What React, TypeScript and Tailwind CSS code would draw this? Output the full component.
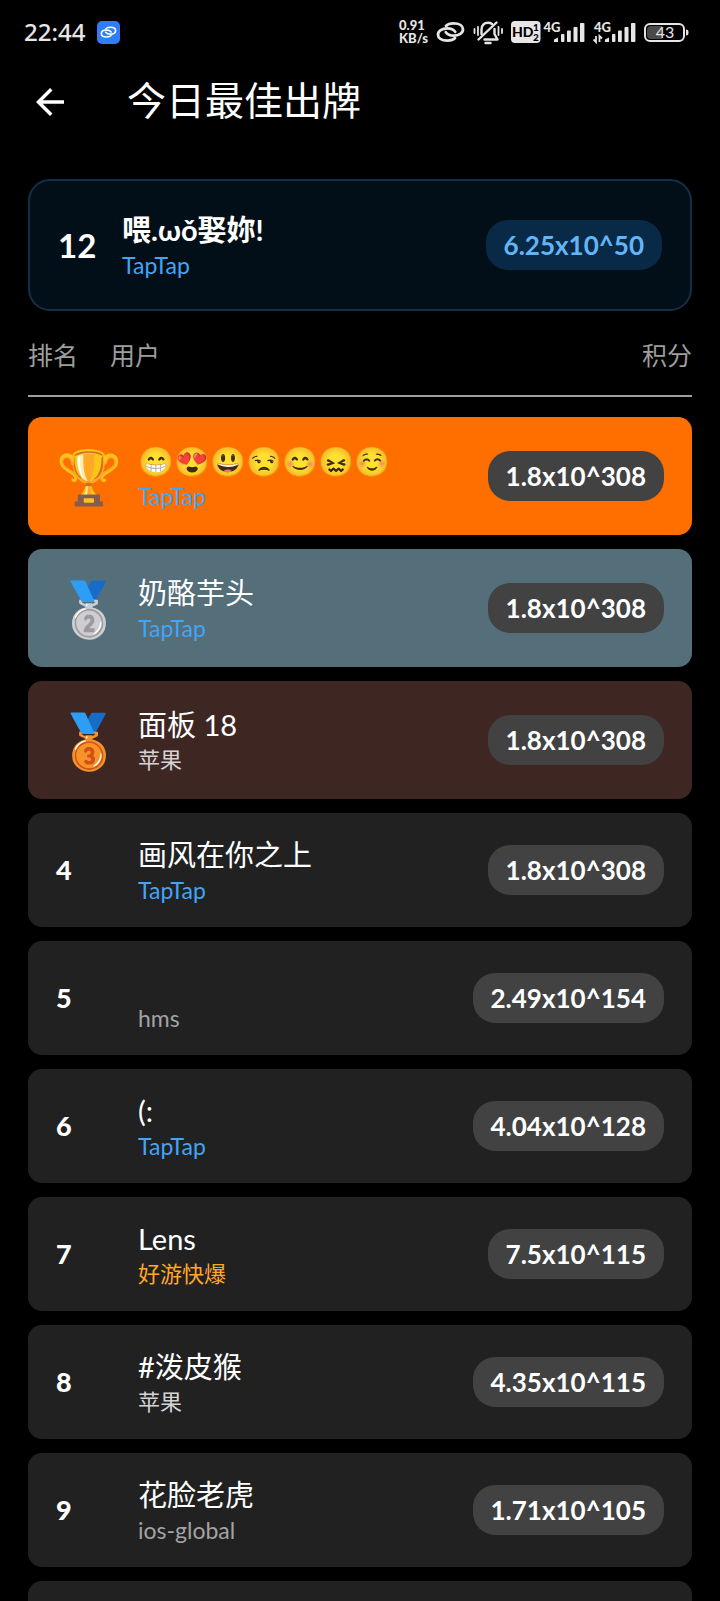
import type { ReactNode } from "react";

const LATIN = "font-['Lato','Noto_Sans_CJK_SC',sans-serif]";

type Tone = "blue" | "grey" | "light" | "amber";

interface Entry {
  rank: number;
  name: string;
  platform: string;
  tone: Tone;
  score: string;
}

const entries: Entry[] = [
  { rank: 1, name: "😁😍😃😒😊😖☺️", platform: "TapTap", tone: "blue", score: "1.8x10^308" },
  { rank: 2, name: "奶酪芋头", platform: "TapTap", tone: "blue", score: "1.8x10^308" },
  { rank: 3, name: "面板 18", platform: "苹果", tone: "light", score: "1.8x10^308" },
  { rank: 4, name: "画风在你之上", platform: "TapTap", tone: "blue", score: "1.8x10^308" },
  { rank: 5, name: "", platform: "hms", tone: "grey", score: "2.49x10^154" },
  { rank: 6, name: "(:", platform: "TapTap", tone: "blue", score: "4.04x10^128" },
  { rank: 7, name: "Lens", platform: "好游快爆", tone: "amber", score: "7.5x10^115" },
  { rank: 8, name: "#泼皮猴", platform: "苹果", tone: "light", score: "4.35x10^115" },
  { rank: 9, name: "花脸老虎", platform: "ios-global", tone: "grey", score: "1.71x10^105" },
  { rank: 10, name: "", platform: "", tone: "grey", score: "" },
];

const tones: Record<Tone, string> = {
  blue: "text-[23px] text-[#42a5f5]",
  grey: "text-[23px] text-[#a3a3a3]",
  light: "text-[22px] text-[#d4d4d4]",
  amber: "text-[22px] text-[#ffa726]",
};

const rowColors: Record<number, string> = {
  1: "bg-[#ff6f00]",
  2: "bg-[#546e7a]",
  3: "bg-[#3e2723]",
};

const medals: Record<number, string> = { 1: "🏆", 2: "🥈", 3: "🥉" };

function LinkRings({ color, width }: { color: string; width: number }) {
  const ring =
    "M13 10C14.800 8 17.600 7.400 20.600 7.400C26.600 7.400 30 10 30 13.200C30 17 26 19.600 20.600 19.600C17 19.600 14.400 18.400 12.800 16.200";
  return (
    <g fill="none" stroke={color} strokeWidth={width} strokeLinecap="round">
      <path d={ring} />
      <path d={ring} transform="rotate(180 17.500 16)" />
    </g>
  );
}

function Bars({ x }: { x: number }) {
  return (
    <g fill="#e6e6e6">
      <path d={`M${x} 26v-2.5l4-2V26z`} />
      <rect x={x + 7} y="18" width="3.4" height="8" rx="0.8" />
      <rect x={x + 13} y="14.5" width="3.8" height="11.5" rx="0.8" />
      <rect x={x + 19.5} y="11" width="4" height="15" rx="0.8" />
      <rect x={x + 26} y="7" width="4.4" height="19" rx="0.8" />
    </g>
  );
}

function StatusBar() {
  return (
    <div className="flex h-16 items-center pl-6 pr-[31px] text-[#e6e6e6]">
      <span className="text-[24px] font-medium leading-8 font-['Noto_Sans',sans-serif]">22:44</span>
      <svg className="ml-3 size-[23px]" viewBox="0 0 23 23" aria-hidden="true">
        <rect width="23" height="23" rx="5" fill="#2f7dfb" />
        <g transform="translate(1.5 2) scale(0.57)">
          <LinkRings color="#fff" width={2.8} />
        </g>
      </svg>
      <div className="ml-auto flex items-center">
        <div className="w-[34px] text-[13px] font-black leading-[13px]">
          <div>0.91</div>
          <div>KB/s</div>
        </div>
        <svg width="36" height="32" viewBox="0 0 36 32" aria-hidden="true">
          <LinkRings color="#e6e6e6" width={2.8} />
        </svg>
        <svg width="38" height="32" viewBox="0 0 38 32" fill="none" stroke="#e6e6e6" strokeWidth="2.4" strokeLinecap="round" strokeLinejoin="round" aria-hidden="true">
          <path d="M12.500 18V13.500C12.500 9.500 15 6.800 19 6.800c1.600 0 3 .4 4 1.200M25.500 13V18l3 5.500H15.500" />
          <path d="M9.500 23.500L27.500 6.500" />
          <path d="M16.500 27h5" />
          <path d="M9 11v8M5.500 13v4M29.500 11v8M33 13v4" strokeWidth="1.8" />
        </svg>
        <svg width="34" height="32" viewBox="0 0 34 32" aria-hidden="true">
          <rect x="4" y="5" width="29.500" height="22" rx="4" fill="#e6e6e6" />
          <g fill="#000" fontFamily="Lato, sans-serif" fontWeight="900">
            <text x="5" y="21" fontSize="14">HD</text>
            <text x="26" y="15" fontSize="10">1</text>
            <text x="26" y="25" fontSize="10">2</text>
          </g>
        </svg>
        <svg width="46" height="32" viewBox="0 0 46 32" aria-hidden="true">
          <text x="2.500" y="15.500" fontSize="13" fontWeight="900" fill="#e6e6e6" fontFamily="Lato, sans-serif">4G</text>
          <Bars x={13} />
        </svg>
        <svg width="52" height="32" viewBox="0 0 52 32" aria-hidden="true">
          <text x="7" y="15.500" fontSize="13" fontWeight="900" fill="#e6e6e6" fontFamily="Lato, sans-serif">4G</text>
          <g stroke="#e6e6e6" strokeWidth="1.800" fill="none">
            <path d="M9 20V26L6.500 23.500M12.500 26v-6l2.500 2.500" />
          </g>
          <Bars x={18} />
        </svg>
        <svg width="50" height="32" viewBox="0 0 50 32" aria-hidden="true">
          <rect x="6" y="8" width="39" height="17" rx="5" fill="none" stroke="#e6e6e6" strokeWidth="2" />
          <path d="M12 10h11v13H12a4 4 0 0 1-4-4v-5a4 4 0 0 1 4-4z" fill="#4a4a4a" />
          <path d="M47 13.500c2 0 2.500 1 2.500 3s-.5 3-2.500 3z" fill="#e6e6e6" />
          <text x="26" y="22" fontSize="16" textAnchor="middle" fill="#e6e6e6" fontFamily="Lato, sans-serif">43</text>
        </svg>
      </div>
    </div>
  );
}

function Pill({ children, className }: { children: ReactNode; className: string }) {
  return (
    <span className={`ml-auto shrink-0 rounded-[22px] px-[18px] py-2 text-[26px] font-bold leading-[34px] ${className}`}>
      {children}
    </span>
  );
}

function User({ name, platform, tone, bold }: { name: string; platform: string; tone: Tone; bold?: boolean }) {
  return (
    <div className="min-w-0">
      <div className={`h-10 truncate text-[29px] leading-10 text-white ${bold ? "font-bold" : ""}`}>{name}</div>
      <div className={`h-[30px] truncate leading-[30px] ${tones[tone]}`}>{platform}</div>
    </div>
  );
}

function Row({ entry }: { entry: Entry }) {
  const medal = medals[entry.rank];
  return (
    <li className={`flex items-center rounded-[14px] px-7 py-[22px] ${rowColors[entry.rank] ?? "bg-[#212121]"}`}>
      {medal ? (
        <span className="w-[82px] shrink-0 text-[53px] leading-[74px]">{medal}</span>
      ) : (
        <span className="w-[82px] shrink-0 text-[27px] font-black leading-[34px] text-white">{entry.rank}</span>
      )}
      <User name={entry.name} platform={entry.platform} tone={entry.tone} />
      {entry.score && <Pill className="bg-[#424242] text-white">{entry.score}</Pill>}
    </li>
  );
}

export default function App() {
  return (
    <div className={`h-screen overflow-hidden bg-black text-white ${LATIN}`}>
      <StatusBar />
      <header className="flex h-[75px] items-center pl-[29px]">
        <button type="button" aria-label="返回" className="size-[42px]">
          <svg viewBox="0 0 24 24" fill="currentColor" className="size-full" aria-hidden="true">
            <path d="M20 11H7.830l5.590-5.590L12 4l-8 8 8 8 1.410-1.410L7.830 13H20v-2z" />
          </svg>
        </button>
        <h1 className="ml-14 pb-1 text-[39px] leading-[52px]">今日最佳出牌</h1>
      </header>
      <main className="px-7 pt-10">
        <section className="flex items-center rounded-[22px] border-2 border-[#132f49] bg-[#030f18] px-7 py-[29px]">
          <span className="w-16 shrink-0 text-[33px] font-bold leading-10">12</span>
          <User name="喂.ωǒ娶妳!" platform="TapTap" tone="blue" bold />
          <Pill className="bg-[#082a47] text-[#64b5f6]">6.25x10^50</Pill>
        </section>
        <div className="flex border-b-2 border-[#9e9e9e] pb-[22px] pt-[26px] text-[25px] leading-9 text-[#9e9e9e]">
          <span className="w-[82px]">排名</span>
          <span>用户</span>
          <span className="ml-auto">积分</span>
        </div>
        <ol className="mt-5 flex flex-col gap-[14px]">
          {entries.map((entry) => (
            <Row key={entry.rank} entry={entry} />
          ))}
        </ol>
      </main>
    </div>
  );
}
